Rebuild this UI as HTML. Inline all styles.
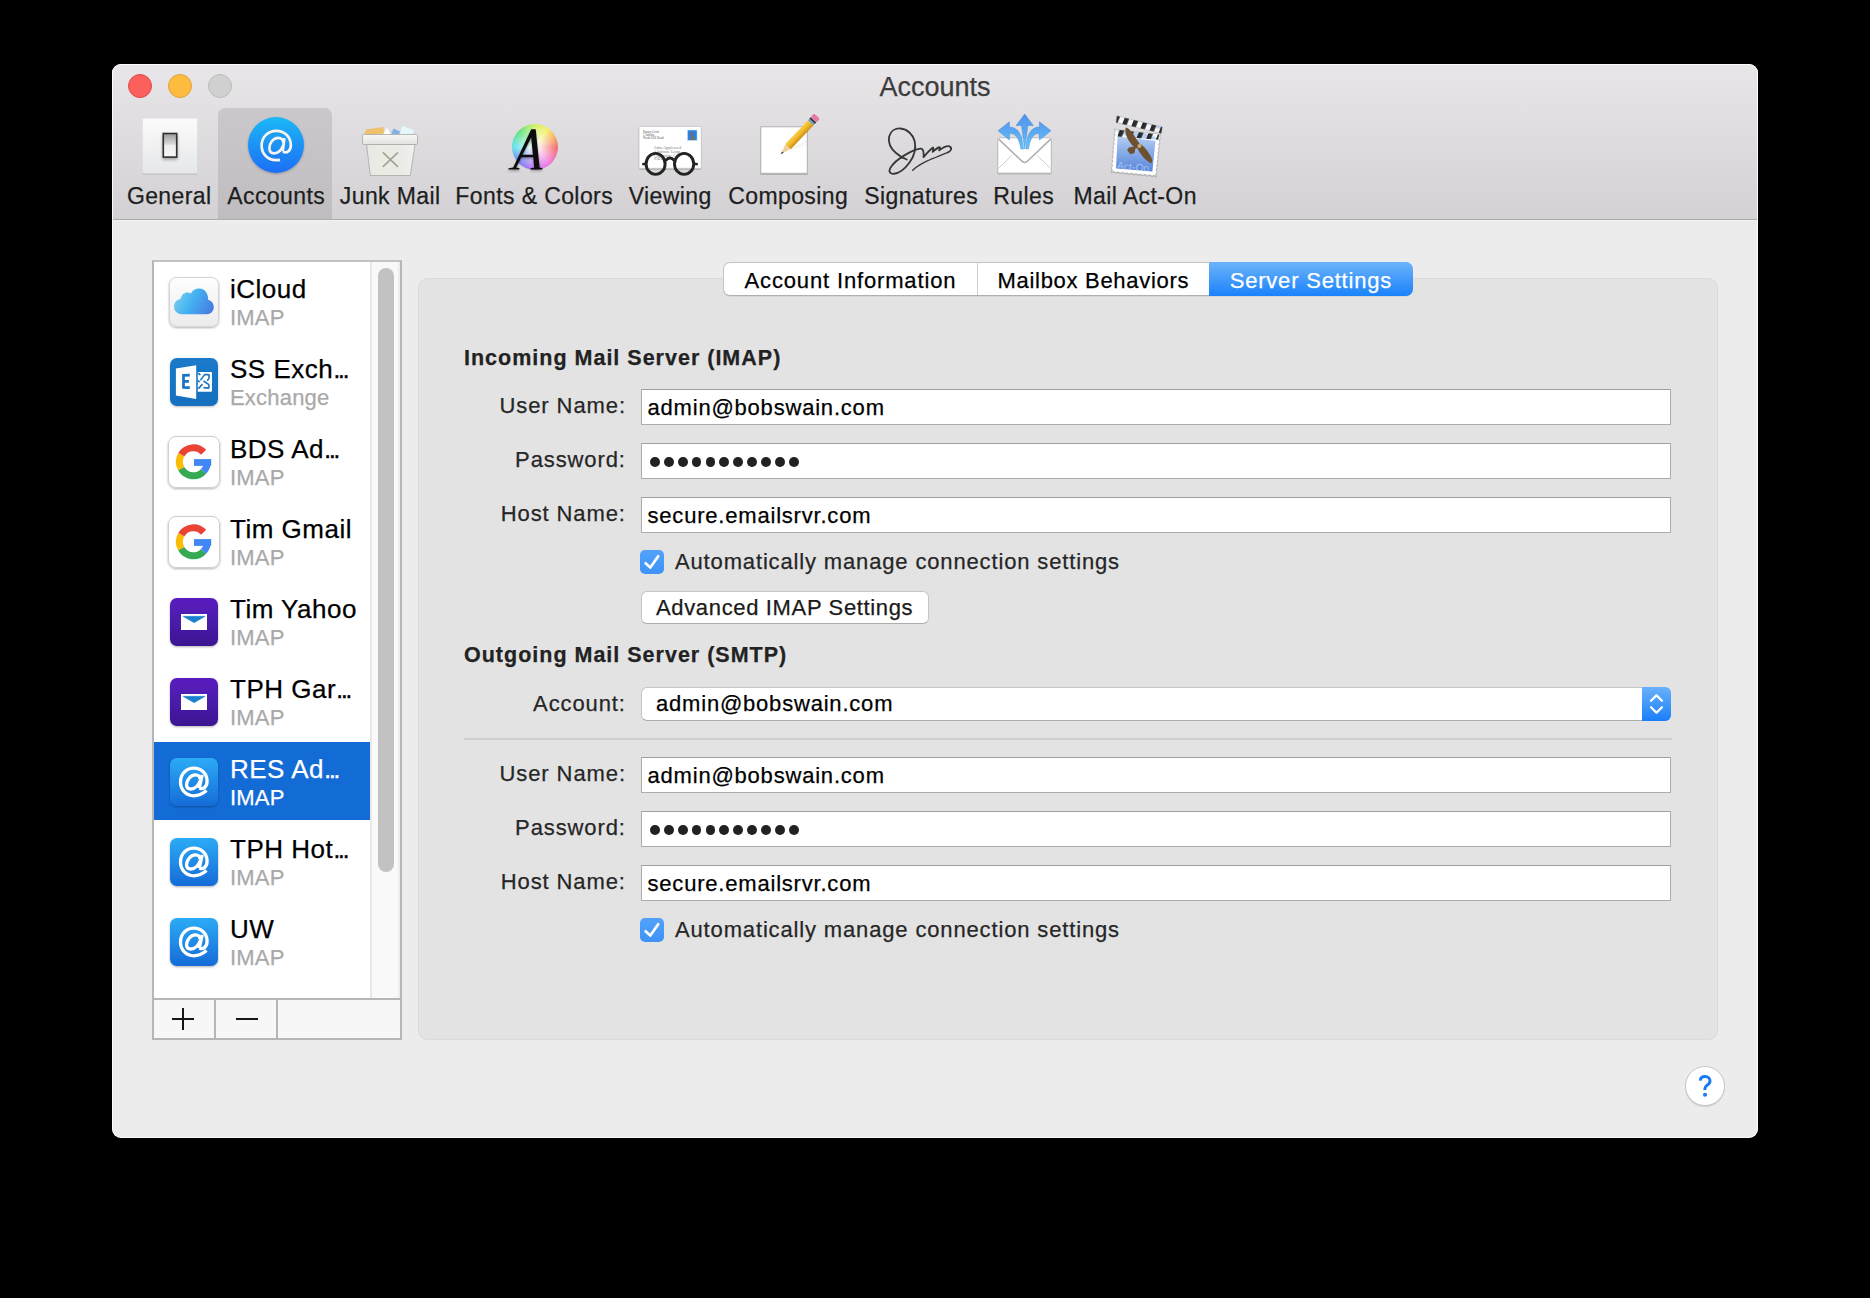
<!DOCTYPE html>
<html><head><meta charset="utf-8"><style>
html,body{margin:0;padding:0;background:#000;width:1870px;height:1298px;overflow:hidden}
.b{position:absolute}
.t{position:absolute;font-family:"Liberation Sans",sans-serif;line-height:1;white-space:pre;-webkit-text-stroke:0.25px currentColor}
.bd{-webkit-text-stroke:0.1px currentColor}
svg{overflow:visible}
</style></head><body>
<div class="b" style="left:112px;top:64px;width:1646px;height:1074px;border-radius:9px;background:#ececec;overflow:hidden"><div class="b" style="left:0;top:0;width:1646px;height:155px;background:linear-gradient(#e8e6e9,#d3d1d4);border-bottom:1px solid #acaaad"></div><div class="b" style="left:0;top:156px;width:1646px;height:1px;background:#f2f2f2"></div><div class="b" style="left:0;top:0;width:1646px;height:1074px;border-radius:9px;box-shadow:inset 0 0 0 1px rgba(255,255,255,0.9)"></div></div>
<div class="b" style="left:128px;top:74px;width:22px;height:22px;border-radius:50%;background:#fc605c;border:1px solid #de4a46"></div>
<div class="b" style="left:168px;top:74px;width:22px;height:22px;border-radius:50%;background:#fdbc40;border:1px solid #dea236"></div>
<div class="b" style="left:208px;top:74px;width:22px;height:22px;border-radius:50%;background:#d0d0d0;border:1px solid #bcbcbc"></div>
<div class="t" style="top:74.34px;font-size:27px;color:#3c3c3c;left:535px;width:800px;text-align:center;">Accounts</div>
<div class="b" style="left:218px;top:108px;width:114px;height:111px;background:linear-gradient(#cac8ca,#bfbdbf);border-radius:7px 7px 0 0"></div>
<div class="t" style="top:184.53px;font-size:23px;color:#1e1e1e;letter-spacing:0.4px;left:-231px;width:800px;text-align:center;text-indent:0.4px;">General</div>
<div class="t" style="top:184.53px;font-size:23px;color:#1e1e1e;letter-spacing:0.4px;left:-124px;width:800px;text-align:center;text-indent:0.4px;">Accounts</div>
<div class="t" style="top:184.53px;font-size:23px;color:#1e1e1e;letter-spacing:0.4px;left:-10px;width:800px;text-align:center;text-indent:0.4px;">Junk Mail</div>
<div class="t" style="top:184.53px;font-size:23px;color:#1e1e1e;letter-spacing:0.4px;left:134px;width:800px;text-align:center;text-indent:0.4px;">Fonts &amp; Colors</div>
<div class="t" style="top:184.53px;font-size:23px;color:#1e1e1e;letter-spacing:0.4px;left:270px;width:800px;text-align:center;text-indent:0.4px;">Viewing</div>
<div class="t" style="top:184.53px;font-size:23px;color:#1e1e1e;letter-spacing:0.4px;left:388px;width:800px;text-align:center;text-indent:0.4px;">Composing</div>
<div class="t" style="top:184.53px;font-size:23px;color:#1e1e1e;letter-spacing:0.4px;left:521px;width:800px;text-align:center;text-indent:0.4px;">Signatures</div>
<div class="t" style="top:184.53px;font-size:23px;color:#1e1e1e;letter-spacing:0.4px;left:623.5px;width:800px;text-align:center;text-indent:0.4px;">Rules</div>
<div class="t" style="top:184.53px;font-size:23px;color:#1e1e1e;letter-spacing:0.4px;left:735px;width:800px;text-align:center;text-indent:0.4px;">Mail Act-On</div>
<svg class="b" style="left:140px;top:116px" width="60" height="62" viewBox="0 0 60 62"><defs><linearGradient id="gp" x1="0" y1="0" x2="0" y2="1"><stop offset="0" stop-color="#fbfbfb"/><stop offset="1" stop-color="#e6e7e9"/></linearGradient><linearGradient id="gs" x1="0" y1="0" x2="0" y2="1"><stop offset="0" stop-color="#9c9c9c"/><stop offset="0.45" stop-color="#d8d8d8"/><stop offset="0.5" stop-color="#eeeeee"/><stop offset="1" stop-color="#f6f6f6"/></linearGradient><filter id="gsh" x="-30%" y="-30%" width="160%" height="160%"><feDropShadow dx="0" dy="0.5" stdDeviation="0.6" flood-color="#000" flood-opacity="0.35"/></filter><filter id="gsh2" x="-50%" y="-50%" width="200%" height="200%"><feDropShadow dx="0" dy="2" stdDeviation="1.5" flood-color="#000" flood-opacity="0.3"/></filter></defs><rect x="2.5" y="2.5" width="55" height="55" rx="1" fill="url(#gp)" filter="url(#gsh)"/><rect x="23.3" y="17.5" width="13.4" height="23.6" fill="url(#gs)" stroke="#2e2e2e" stroke-width="1.6" filter="url(#gsh2)"/></svg>
<svg class="b" style="left:246px;top:115px" width="60" height="62" viewBox="246 115 60 62"><defs><linearGradient id="acg" x1="0" y1="0" x2="0" y2="1"><stop offset="0" stop-color="#1fb8f6"/><stop offset="1" stop-color="#1a6ef6"/></linearGradient><filter id="acsh" x="-30%" y="-30%" width="160%" height="160%"><feDropShadow dx="0" dy="1" stdDeviation="0.8" flood-color="#000" flood-opacity="0.25"/></filter><filter id="acsh2" x="-30%" y="-30%" width="160%" height="160%"><feDropShadow dx="0" dy="0.6" stdDeviation="0.5" flood-color="#000" flood-opacity="0.2"/></filter></defs><circle cx="276" cy="145" r="28" fill="url(#acg)" filter="url(#acsh)"/><g transform="translate(252,121)" fill="none" stroke="#f4f5f0" stroke-width="2.7" filter="url(#acsh2)"><path d="M31 30.6 C34.6 32.6 38.8 30 38.8 24.5 C38.8 15.5 32.3 9.9 24.2 9.9 C15.8 9.9 9.6 16.3 9.6 24.5 C9.6 33 15.8 39.1 24.2 39.1 C25.6 39.1 26.8 39 28 38.8"/><path d="M32.4 17.2 L30.7 30.3"/><path d="M31.7 22.3 C31.2 18.9 29.1 16.9 26.3 16.9 C20.8 16.9 17.4 22.5 17.4 27 C17.4 30.5 19.3 32.4 22 32.4 C26.5 32.4 30.3 28.2 31.4 23.5"/></g></svg>
<svg class="b" style="left:360px;top:122px" width="62" height="58" viewBox="360 122 62 58"><defs><linearGradient id="tb" x1="0" y1="0" x2="1" y2="0"><stop offset="0" stop-color="#e8e8e6"/><stop offset="0.3" stop-color="#ecebe4"/><stop offset="0.7" stop-color="#e9ebe6"/><stop offset="1" stop-color="#f2f2f0"/></linearGradient><linearGradient id="tr" x1="0" y1="0" x2="0" y2="1"><stop offset="0" stop-color="#f8f8f6"/><stop offset="1" stop-color="#e2e2de"/></linearGradient></defs><path d="M364 134.5 L383.5 127.5 L384 134.5 Z" fill="#e9bf62"/><path d="M364.5 134.5 L366 129.5 L383 127 L384 134.5 Z" fill="#eec16a"/><path d="M383 134.5 L387 127 L391 134.5 Z" fill="#fff" stroke="#ddd" stroke-width="0.4"/><path d="M391 134.5 L393.5 128.5 L400 131.5 L399.5 134.5 Z" fill="#7fb3e4"/><path d="M399.5 134.5 L402 125.5 L414.5 130 L413 134.5 Z" fill="#e6f6fb" stroke="#cde" stroke-width="0.4"/><path d="M366.5 144.5 L415 144.5 L410.3 175.5 L370.3 175.5 Z" fill="url(#tb)" stroke="#a8a8a6" stroke-width="0.8"/><rect x="362.5" y="134.5" width="55" height="10" rx="1.2" fill="url(#tr)" stroke="#a8a8a6" stroke-width="0.8"/><path d="M382.8 152.3 L398 166.8 M398 152.3 L382.8 166.8" stroke="#a4a290" stroke-width="1.6"/></svg>
<div class="b" style="left:512px;top:124px;width:46px;height:46px;border-radius:50%;background:conic-gradient(from 0deg,#d0f060,#f4ee62 35deg,#f6a860 65deg,#f26868 92deg,#f276e0 140deg,#b070f0 190deg,#6a84f2 230deg,#5ee0e8 270deg,#5ae47a 315deg,#d0f060)"></div>
<svg class="b" style="left:500px;top:118px" width="66" height="60" viewBox="500 118 66 60"><defs><radialGradient id="cw" cx="0.5" cy="0.5" r="0.5"><stop offset="0" stop-color="#fff" stop-opacity="1"/><stop offset="0.15" stop-color="#fff" stop-opacity="0.9"/><stop offset="1" stop-color="#fff" stop-opacity="0"/></radialGradient><filter id="ash" x="-30%" y="-30%" width="160%" height="160%"><feDropShadow dx="0" dy="1.5" stdDeviation="1.2" flood-color="#000" flood-opacity="0.35"/></filter></defs><circle cx="535" cy="147" r="23" fill="url(#cw)"/><path d="M508.3 169.6 L519.3 169.6 L519.5 168.2 L516.2 167.6 L521.3 157.3 L533.2 157.3 L534.2 167.6 L530.6 168.2 L530.4 169.6 L542.3 169.6 L542.5 168.2 L539.6 167.6 L535.7 129.3 L531.2 129.3 L513.2 167.4 L508.6 168.2 Z M522.5 154.8 L531.2 137.5 L532.9 154.8 Z" fill="#111" fill-rule="evenodd" filter="url(#ash)"/></svg>
<svg class="b" style="left:636px;top:124px" width="66" height="56" viewBox="636 124 66 56"><defs><filter id="vsh" x="-30%" y="-30%" width="160%" height="160%"><feDropShadow dx="0" dy="0.6" stdDeviation="0.5" flood-color="#000" flood-opacity="0.35"/></filter></defs><rect x="639" y="126.5" width="62.3" height="41.8" rx="1" fill="#fff" stroke="#c6c6c6" stroke-width="0.8" filter="url(#vsh)"/><rect x="687.3" y="130" width="9.8" height="10.5" fill="#2d7fe0" stroke="#dfe6ee" stroke-width="0.6"/><path d="M691 132 L693.5 138.5 L690 139" stroke="#8b6a3c" stroke-width="1.6" fill="none"/><g font-family="Liberation Serif" fill="#555"><text x="643" y="132.8" font-size="3.2">Danny Croft</text><text x="643" y="135.6" font-size="3.2">1 Infinite</text><text x="643" y="138.8" font-size="3.2">North Hill Road</text></g><g font-family="Liberation Serif" fill="#808080"><text x="654" y="149" font-size="4.3">John Appleseed</text><text x="654" y="152.8" font-size="4.3">1 Infinite Loop</text><text x="654" y="156.6" font-size="4.3">Cupertino, CA</text><text x="654" y="160.4" font-size="4.3">95014</text></g><g fill="none" stroke="#232323" stroke-width="2.9"><ellipse cx="655.6" cy="163.9" rx="9.5" ry="10.5"/><ellipse cx="684.1" cy="163.9" rx="9.6" ry="10.5"/><path d="M665.5 160.5 Q670 155.5 674.3 160.5"/><path d="M642.3 164.2 L646.3 163.8 M693.5 163.8 L697.8 164.2" stroke-width="2.6"/></g></svg>
<svg class="b" style="left:756px;top:110px" width="68" height="70" viewBox="756 110 68 70"><defs><filter id="csh" x="-30%" y="-30%" width="160%" height="160%"><feDropShadow dx="0" dy="0.6" stdDeviation="0.5" flood-color="#000" flood-opacity="0.35"/></filter><linearGradient id="pen" x1="0" y1="0" x2="0" y2="1"><stop offset="0" stop-color="#f7cf48"/><stop offset="0.5" stop-color="#f1b82a"/><stop offset="1" stop-color="#c98c10"/></linearGradient><linearGradient id="psh" x1="0" y1="0" x2="1" y2="1"><stop offset="0" stop-color="#000" stop-opacity="0.08"/><stop offset="1" stop-color="#000" stop-opacity="0"/></linearGradient></defs><rect x="760.8" y="126.8" width="46.5" height="46.5" fill="#fff" stroke="#b4b4b4" stroke-width="1" filter="url(#csh)"/><path d="M788 151 L807 139 L807 146 Z" fill="url(#psh)"/><g transform="translate(780.8,154.3) rotate(-46.5)"><path d="M0 0 L10.5 -3.5 L10.5 3.5 Z" fill="#f0cf9c"/><path d="M0 0 L3 -1 L3 1 Z" fill="#333"/><rect x="10.5" y="-3.8" width="33" height="7.6" fill="url(#pen)"/><rect x="43.5" y="-3.8" width="4" height="7.6" fill="#6f9fc2"/><rect x="45.8" y="-3.8" width="1.5" height="7.6" fill="#3a2a2a"/><rect x="47.5" y="-4.1" width="5.2" height="8.2" rx="2" fill="#e47aa6"/></g></svg>
<svg class="b" style="left:875px;top:115px" width="90" height="70" viewBox="0 0 1669 1298"><path d="M590,825 C520,800 450,760 390,705 C290,620 240,520 262,400 C290,290 380,245 470,250 C600,260 700,360 735,480 C760,600 730,760 640,880 C560,990 460,1080 350,1090 C280,1095 250,1050 280,990 C330,900 440,810 560,740 C680,670 800,615 860,625 C910,640 905,720 900,780 C950,720 1020,640 1070,605 C1090,595 1080,650 1070,685 C1120,640 1170,600 1195,598 C1215,600 1195,640 1190,655 C1250,610 1320,560 1380,580 C1430,600 1420,660 1360,690" fill="none" stroke="#363636" stroke-width="34" stroke-linecap="round" stroke-linejoin="round"/><path d="M1360,690 C1250,740 1100,790 950,860 C850,910 760,960 700,1025" fill="none" stroke="#363636" stroke-width="26" stroke-linecap="round"/></svg>
<svg class="b" style="left:990px;top:105px" width="70" height="75" viewBox="0 0 1211 1298"><defs><linearGradient id="rg" x1="0" y1="150" x2="0" y2="760" gradientUnits="userSpaceOnUse"><stop offset="0" stop-color="#4f92ea"/><stop offset="0.5" stop-color="#5aa8f2"/><stop offset="1" stop-color="#64c8f8"/></linearGradient><filter id="rsh" x="-30%" y="-30%" width="160%" height="160%"><feDropShadow dx="0" dy="10" stdDeviation="8" flood-color="#000" flood-opacity="0.35"/></filter></defs><rect x="135" y="568" width="925" height="610" rx="12" fill="#fff" stroke="#b8b8b8" stroke-width="14" filter="url(#rsh)"/><path d="M150 590 L540 960 Q600 1030 660 960 L1050 590" fill="none" stroke="#adadad" stroke-width="26"/><path d="M145 1100 L380 870 M1050 1100 L815 870" fill="none" stroke="#c4c4c4" stroke-width="14"/><g fill="url(#rg)" stroke="#3f85d8" stroke-width="8" stroke-linejoin="round"><path d="M450 355 L600 155 L750 355 L655 355 L600 760 L545 355 Z"/><path d="M140 445 L335 290 L335 380 C470 380 560 500 580 760 L535 760 C500 560 440 490 340 490 L335 605 Z"/><path d="M1055 445 L855 290 L855 380 C720 380 630 500 620 760 L665 760 C700 560 760 490 850 490 L855 605 Z"/></g></svg>
<svg class="b" style="left:1100px;top:105px" width="75" height="80" viewBox="0 0 1217 1298"><defs><linearGradient id="sg" x1="0" y1="0" x2="0" y2="1"><stop offset="0" stop-color="#b3ccf2"/><stop offset="1" stop-color="#5585dc"/></linearGradient><filter id="ssh" x="-30%" y="-30%" width="160%" height="160%"><feDropShadow dx="0" dy="10" stdDeviation="10" flood-color="#000" flood-opacity="0.35"/></filter><pattern id="stripe" width="150" height="300" patternUnits="userSpaceOnUse" patternTransform="rotate(22)"><rect width="150" height="300" fill="#f4f6fa"/><rect y="150" width="150" height="150" fill="#b9d0f4"/><rect width="72" height="300" fill="#2b2b2b"/></pattern></defs><path d="M235 385 L235 385 Q269 423 310 394 L310 394 Q344 432 385 402 L385 402 Q419 440 460 410 L460 410 Q494 449 535 419 L535 419 Q569 457 610 428 L610 428 Q644 466 685 436 L685 436 Q719 474 760 444 L760 444 Q794 483 835 453 L835 453 Q869 491 910 462 L910 462 Q944 500 985 470 L985 470 Q948 501 978 539 L978 539 Q941 570 971 608 L971 608 Q934 639 964 677 L964 677 Q927 708 957 746 L957 746 Q920 777 950 815 L950 815 Q913 846 943 884 L943 884 Q906 915 936 953 L936 953 Q899 984 929 1022 L929 1022 Q892 1053 922 1091 L922 1091 Q885 1122 915 1160 L915 1160 Q881 1123 842 1153 L842 1153 Q808 1116 768 1146 L768 1146 Q734 1109 694 1139 L694 1139 Q661 1102 621 1132 L621 1132 Q587 1095 548 1125 L548 1125 Q514 1088 474 1118 L474 1118 Q440 1081 400 1111 L400 1111 Q367 1074 327 1104 L327 1104 Q293 1067 254 1097 L254 1097 Q220 1060 180 1090 L180 1090 Q217 1057 186 1020 L186 1020 Q222 987 191 949 L191 949 Q228 916 196 878 L196 878 Q233 846 202 808 L202 808 Q239 775 208 738 L208 738 Q244 705 213 667 L213 667 Q250 634 218 596 L218 596 Q255 564 224 526 L224 526 Q261 493 230 456 L230 456 Q266 423 235 385 Z" fill="#fff" stroke="#9a9a9a" stroke-width="7" filter="url(#ssh)"/><path d="M285 510 L900 580 L850 1080 L260 1030 Z" fill="url(#sg)"/><path d="M290 400 L960 480 L945 565 L285 510 Z" fill="url(#stripe)"/><path d="M275 175 L1012 355 L995 462 L258 285 Z" fill="url(#stripe)" stroke="#999" stroke-width="6"/><g fill="#6e4f2e"><path d="M420 365 C490 380 540 470 590 550 C620 600 650 630 660 655 L580 710 C520 650 450 570 425 490 C410 440 405 400 420 365 Z"/><path d="M600 690 L670 640 C740 700 810 790 850 890 L835 950 C740 900 650 800 600 690 Z"/><path d="M470 690 L580 670 L560 780 L490 800 L440 730 Z"/><circle cx="640" cy="665" r="34" fill="#c9a678"/></g><text x="270" y="1040" font-family="Liberation Sans" font-size="170" fill="#e0eafa" fill-opacity="0.55" transform="rotate(5 270 1040)">Act-On</text></svg><div class="b" style="left:152px;top:260px;width:250px;height:780px;border:2px solid #b6b6b6;border-top-color:#c2c2c2;background:#fff;box-sizing:border-box"></div>
<div class="b" style="left:370px;top:262px;width:30px;height:736px;background:#f9f9f9;border-left:2px solid #e8e8e8;border-right:2px solid #ededed;box-sizing:border-box"></div>
<div class="b" style="left:378px;top:268px;width:16px;height:604px;background:#c2c2c2;border-radius:8px"></div>
<div class="b" style="left:154px;top:998px;width:246px;height:40px;background:#f7f7f7;border-top:2px solid #b6b6b6;box-sizing:border-box"></div>
<div class="b" style="left:214px;top:1000px;width:2px;height:38px;background:#b6b6b6"></div>
<div class="b" style="left:276px;top:1000px;width:2px;height:38px;background:#b6b6b6"></div>
<div class="b" style="left:172px;top:1018px;width:22px;height:2px;background:#161616"></div>
<div class="b" style="left:182px;top:1008px;width:2px;height:22px;background:#161616"></div>
<div class="b" style="left:236px;top:1018px;width:22px;height:2px;background:#161616"></div>
<div class="t" style="top:275.99px;font-size:26px;color:#000;letter-spacing:0.5px;left:230px;">iCloud</div>
<div class="t" style="top:307.38px;font-size:22px;color:#a9a9a9;letter-spacing:0.2px;left:230px;">IMAP</div>
<svg class="b" style="left:169px;top:277px" width="50" height="50" viewBox="0 0 50 50"><defs><linearGradient id="icg" x1="0" y1="0" x2="0" y2="1"><stop offset="0" stop-color="#fefefe"/><stop offset="1" stop-color="#ebebeb"/></linearGradient><linearGradient id="clg" gradientUnits="userSpaceOnUse" x1="5" y1="14" x2="45" y2="36"><stop offset="0" stop-color="#86d3f2"/><stop offset="0.45" stop-color="#42b2f0"/><stop offset="1" stop-color="#4a74e2"/></linearGradient><filter id="sh1" x="-20%" y="-20%" width="140%" height="150%"><feDropShadow dx="0" dy="1" stdDeviation="0.8" flood-color="#000" flood-opacity="0.3"/></filter></defs><rect x="0.5" y="0.5" width="49" height="49" rx="7" fill="url(#icg)" stroke="#d6d6d6" stroke-width="1" filter="url(#sh1)"/><path d="M12.5 37.2 C7.8 37.2 5 33.6 5 29.6 C5 25.5 8 22.3 11.6 22 C12.2 18.2 15 15.6 18.5 15.6 C19.8 15.6 20.8 15.9 21.8 16.5 C23.5 13.4 26.6 11.6 30 11.6 C35.6 11.6 39.4 16.3 39.1 22.8 C42.5 23.7 44.8 26.5 44.8 30 C44.8 34.1 41.8 37.2 37.6 37.2 Z" fill="url(#clg)"/></svg>
<div class="t" style="top:355.99px;font-size:26px;color:#000;letter-spacing:0.5px;left:230px;">SS Exch<span style="letter-spacing:-2.6px">...</span></div>
<div class="t" style="top:387.38px;font-size:22px;color:#a9a9a9;letter-spacing:0.2px;left:230px;">Exchange</div>
<svg class="b" style="left:170px;top:358px" width="48" height="48" viewBox="0 0 48 48"><defs><filter id="sh2" x="-20%" y="-20%" width="140%" height="150%"><feDropShadow dx="0" dy="1" stdDeviation="0.8" flood-color="#000" flood-opacity="0.25"/></filter><linearGradient id="exg" x1="0" y1="0" x2="0" y2="1"><stop offset="0" stop-color="#1b7acb"/><stop offset="1" stop-color="#136fbe"/></linearGradient></defs><rect x="0" y="0" width="48" height="48" rx="7" fill="url(#exg)" filter="url(#sh2)"/><path d="M5.9 10.5 L26.2 7.2 L26.2 41 L5.9 37.5 Z" fill="#fff"/><path d="M27.8 13.9 L41 13.9 Q42 13.9 42 14.9 L42 32.8 Q42 33.8 41 33.8 L27.8 33.8 Z" fill="#fff"/><path d="M19.8 17.2 L13.5 17.4 L13.5 29.4 L19.8 29.7 M13.5 23.4 L18.9 23.4" fill="none" stroke="#1873c3" stroke-width="2.7"/><g fill="none" stroke="#1873c3" stroke-width="1.6" stroke-linejoin="round"><path d="M30.4 22.4 L34.6 16.6 L38.2 16.6 Q39.3 16.6 39.1 18 L39 20 Q38.8 21.5 37 22.6"/><path d="M33.5 23 L38.2 26.2 Q39 26.8 39 28 L38.9 29.5 Q38.9 30.1 38.2 30.1 L33.5 29.6"/><path d="M32.5 26.1 L28.3 30.7 M27.9 15.4 Q29.5 15.6 30.4 17.2 M27.9 22.9 Q29.2 23.2 29.6 24.3"/></g></svg>
<div class="t" style="top:435.99px;font-size:26px;color:#000;letter-spacing:0.5px;left:230px;">BDS Ad<span style="letter-spacing:-2.6px">...</span></div>
<div class="t" style="top:467.38px;font-size:22px;color:#a9a9a9;letter-spacing:0.2px;left:230px;">IMAP</div>
<svg class="b" style="left:168px;top:436px" width="52" height="52" viewBox="0 0 52 52"><defs><filter id="sh3" x="-20%" y="-20%" width="140%" height="150%"><feDropShadow dx="0" dy="1" stdDeviation="0.8" flood-color="#000" flood-opacity="0.3"/></filter></defs><rect x="0.5" y="0.5" width="51" height="51" rx="7.5" fill="#fff" stroke="#d0d0d0" stroke-width="1" filter="url(#sh3)"/><path d="M35.64 16.25 A14.0 14.0 0 0 0 13.28 18.80" fill="none" stroke="#ea4335" stroke-width="7"/><path d="M13.28 18.80 A14.0 14.0 0 0 0 13.28 32.80" fill="none" stroke="#fbbc05" stroke-width="7"/><path d="M13.28 32.80 A14.0 14.0 0 0 0 35.64 35.35" fill="none" stroke="#34a853" stroke-width="7"/><path d="M35.64 35.35 A14.0 14.0 0 0 0 39.40 25.80" fill="none" stroke="#4285f4" stroke-width="7"/><rect x="26" y="23.1" width="17.2" height="6.8" fill="#4285f4"/></svg>
<div class="t" style="top:515.99px;font-size:26px;color:#000;letter-spacing:0.5px;left:230px;">Tim Gmail</div>
<div class="t" style="top:547.38px;font-size:22px;color:#a9a9a9;letter-spacing:0.2px;left:230px;">IMAP</div>
<svg class="b" style="left:168px;top:516px" width="52" height="52" viewBox="0 0 52 52"><defs><filter id="sh3" x="-20%" y="-20%" width="140%" height="150%"><feDropShadow dx="0" dy="1" stdDeviation="0.8" flood-color="#000" flood-opacity="0.3"/></filter></defs><rect x="0.5" y="0.5" width="51" height="51" rx="7.5" fill="#fff" stroke="#d0d0d0" stroke-width="1" filter="url(#sh3)"/><path d="M35.64 16.25 A14.0 14.0 0 0 0 13.28 18.80" fill="none" stroke="#ea4335" stroke-width="7"/><path d="M13.28 18.80 A14.0 14.0 0 0 0 13.28 32.80" fill="none" stroke="#fbbc05" stroke-width="7"/><path d="M13.28 32.80 A14.0 14.0 0 0 0 35.64 35.35" fill="none" stroke="#34a853" stroke-width="7"/><path d="M35.64 35.35 A14.0 14.0 0 0 0 39.40 25.80" fill="none" stroke="#4285f4" stroke-width="7"/><rect x="26" y="23.1" width="17.2" height="6.8" fill="#4285f4"/></svg>
<div class="t" style="top:595.99px;font-size:26px;color:#000;letter-spacing:0.5px;left:230px;">Tim Yahoo</div>
<div class="t" style="top:627.38px;font-size:22px;color:#a9a9a9;letter-spacing:0.2px;left:230px;">IMAP</div>
<svg class="b" style="left:170px;top:598px" width="48" height="48" viewBox="0 0 48 48"><defs><linearGradient id="yg" x1="0" y1="0" x2="0" y2="1"><stop offset="0" stop-color="#5a1ec0"/><stop offset="1" stop-color="#3b1792"/></linearGradient><filter id="sh4" x="-20%" y="-20%" width="140%" height="150%"><feDropShadow dx="0" dy="1" stdDeviation="0.8" flood-color="#000" flood-opacity="0.3"/></filter></defs><rect x="0" y="0" width="48" height="48" rx="7" fill="url(#yg)" filter="url(#sh4)"/><rect x="11" y="16" width="26" height="16" fill="#fff"/><path d="M13.4 18.4 L34.8 18.4 L24.1 24.6 Z" fill="#1a80cf" stroke="#1a80cf" stroke-width="0.8" stroke-linejoin="round"/></svg>
<div class="t" style="top:675.99px;font-size:26px;color:#000;letter-spacing:0.5px;left:230px;">TPH Gar<span style="letter-spacing:-2.6px">...</span></div>
<div class="t" style="top:707.38px;font-size:22px;color:#a9a9a9;letter-spacing:0.2px;left:230px;">IMAP</div>
<svg class="b" style="left:170px;top:678px" width="48" height="48" viewBox="0 0 48 48"><defs><linearGradient id="yg" x1="0" y1="0" x2="0" y2="1"><stop offset="0" stop-color="#5a1ec0"/><stop offset="1" stop-color="#3b1792"/></linearGradient><filter id="sh4" x="-20%" y="-20%" width="140%" height="150%"><feDropShadow dx="0" dy="1" stdDeviation="0.8" flood-color="#000" flood-opacity="0.3"/></filter></defs><rect x="0" y="0" width="48" height="48" rx="7" fill="url(#yg)" filter="url(#sh4)"/><rect x="11" y="16" width="26" height="16" fill="#fff"/><path d="M13.4 18.4 L34.8 18.4 L24.1 24.6 Z" fill="#1a80cf" stroke="#1a80cf" stroke-width="0.8" stroke-linejoin="round"/></svg>
<div class="b" style="left:154px;top:742px;width:216px;height:78px;background:#136cd6"></div>
<div class="t" style="top:755.99px;font-size:26px;color:#fff;letter-spacing:0.5px;left:230px;">RES Ad<span style="letter-spacing:-2.6px">...</span></div>
<div class="t" style="top:787.38px;font-size:22px;color:#fff;letter-spacing:0.2px;left:230px;">IMAP</div>
<svg class="b" style="left:170px;top:758px" width="48" height="48" viewBox="0 0 48 48"><defs><linearGradient id="ag" x1="0" y1="0" x2="0" y2="1"><stop offset="0" stop-color="#2cabf6"/><stop offset="1" stop-color="#166bd8"/></linearGradient><filter id="sh5" x="-20%" y="-20%" width="140%" height="150%"><feDropShadow dx="0" dy="1" stdDeviation="0.8" flood-color="#000" flood-opacity="0.3"/></filter></defs><rect x="0" y="0" width="48" height="48" rx="7" fill="url(#ag)" filter="url(#sh5)"/><g fill="none" stroke="#fff" stroke-width="3.3"><path d="M29.5 30.2 C33 31.8 37.1 29 37.1 23.2 C37.1 15.2 31 10.2 23.8 10.2 C16 10.2 10.5 16.3 10.5 24 C10.5 32 16.3 37.8 24 37.8 C28.5 37.8 32.6 35.8 36.6 32.5"/><path d="M32.1 17 L29.3 30.4"/><path d="M30.5 21.8 C30 18.4 28 16.9 25.4 16.9 C20.4 16.9 16.5 22.5 16.5 27.1 C16.5 29.8 18.2 31 20.7 31 C25.2 31 29 26.8 30.2 22.6"/></g></svg>
<div class="t" style="top:835.99px;font-size:26px;color:#000;letter-spacing:0.5px;left:230px;">TPH Hot<span style="letter-spacing:-2.6px">...</span></div>
<div class="t" style="top:867.38px;font-size:22px;color:#a9a9a9;letter-spacing:0.2px;left:230px;">IMAP</div>
<svg class="b" style="left:170px;top:838px" width="48" height="48" viewBox="0 0 48 48"><defs><linearGradient id="ag" x1="0" y1="0" x2="0" y2="1"><stop offset="0" stop-color="#2cabf6"/><stop offset="1" stop-color="#166bd8"/></linearGradient><filter id="sh5" x="-20%" y="-20%" width="140%" height="150%"><feDropShadow dx="0" dy="1" stdDeviation="0.8" flood-color="#000" flood-opacity="0.3"/></filter></defs><rect x="0" y="0" width="48" height="48" rx="7" fill="url(#ag)" filter="url(#sh5)"/><g fill="none" stroke="#fff" stroke-width="3.3"><path d="M29.5 30.2 C33 31.8 37.1 29 37.1 23.2 C37.1 15.2 31 10.2 23.8 10.2 C16 10.2 10.5 16.3 10.5 24 C10.5 32 16.3 37.8 24 37.8 C28.5 37.8 32.6 35.8 36.6 32.5"/><path d="M32.1 17 L29.3 30.4"/><path d="M30.5 21.8 C30 18.4 28 16.9 25.4 16.9 C20.4 16.9 16.5 22.5 16.5 27.1 C16.5 29.8 18.2 31 20.7 31 C25.2 31 29 26.8 30.2 22.6"/></g></svg>
<div class="t" style="top:915.99px;font-size:26px;color:#000;letter-spacing:0.5px;left:230px;">UW</div>
<div class="t" style="top:947.38px;font-size:22px;color:#a9a9a9;letter-spacing:0.2px;left:230px;">IMAP</div>
<svg class="b" style="left:170px;top:918px" width="48" height="48" viewBox="0 0 48 48"><defs><linearGradient id="ag" x1="0" y1="0" x2="0" y2="1"><stop offset="0" stop-color="#2cabf6"/><stop offset="1" stop-color="#166bd8"/></linearGradient><filter id="sh5" x="-20%" y="-20%" width="140%" height="150%"><feDropShadow dx="0" dy="1" stdDeviation="0.8" flood-color="#000" flood-opacity="0.3"/></filter></defs><rect x="0" y="0" width="48" height="48" rx="7" fill="url(#ag)" filter="url(#sh5)"/><g fill="none" stroke="#fff" stroke-width="3.3"><path d="M29.5 30.2 C33 31.8 37.1 29 37.1 23.2 C37.1 15.2 31 10.2 23.8 10.2 C16 10.2 10.5 16.3 10.5 24 C10.5 32 16.3 37.8 24 37.8 C28.5 37.8 32.6 35.8 36.6 32.5"/><path d="M32.1 17 L29.3 30.4"/><path d="M30.5 21.8 C30 18.4 28 16.9 25.4 16.9 C20.4 16.9 16.5 22.5 16.5 27.1 C16.5 29.8 18.2 31 20.7 31 C25.2 31 29 26.8 30.2 22.6"/></g></svg>
<div class="b" style="left:418px;top:278px;width:1300px;height:762px;background:#e3e3e3;border:1px solid #d9d9d9;border-radius:10px;box-sizing:border-box"></div>
<div class="b" style="left:723px;top:262px;width:689px;height:34px;background:#fff;border:1px solid #c4c4c4;border-bottom-color:#b0b0b0;border-radius:7px;box-sizing:border-box;box-shadow:0 1px 0 rgba(0,0,0,0.05)"></div>
<div class="b" style="left:977px;top:263px;width:1px;height:32px;background:#d0d0d0"></div>
<div class="b" style="left:1209px;top:262px;width:204px;height:34px;background:linear-gradient(#6cb3fa,#1a82fb);border-radius:0 7px 7px 0"></div>
<div class="t" style="top:270.38px;font-size:22px;color:#000;letter-spacing:0.85px;left:450px;width:800px;text-align:center;text-indent:0.85px;">Account Information</div>
<div class="t" style="top:270.38px;font-size:22px;color:#000;letter-spacing:0.7px;left:693px;width:800px;text-align:center;text-indent:0.7px;">Mailbox Behaviors</div>
<div class="t" style="top:270.38px;font-size:22px;color:#fff;letter-spacing:0.8px;left:910.5px;width:800px;text-align:center;text-indent:0.8px;">Server Settings</div>
<div class="t" style="top:347.80px;font-size:21.5px;color:#222;font-weight:700;letter-spacing:1.0px;left:464px;">Incoming Mail Server (IMAP)</div>
<div class="t" style="top:395.38px;font-size:22px;color:#262626;letter-spacing:0.9px;right:1245px;margin-right:-0.9px;">User Name:</div>
<div class="b" style="left:641px;top:389px;width:1030px;height:36px;background:#fff;border:1px solid #acacac;border-top-color:#a0a0a0;box-sizing:border-box"></div>
<div class="t" style="top:397.38px;font-size:22px;color:#000;letter-spacing:0.8px;left:647.5px;">admin@bobswain.com</div>
<div class="t" style="top:449.38px;font-size:22px;color:#262626;letter-spacing:0.9px;right:1245px;margin-right:-0.9px;">Password:</div>
<div class="b" style="left:641px;top:443px;width:1030px;height:36px;background:#fff;border:1px solid #acacac;border-top-color:#a0a0a0;box-sizing:border-box"></div>
<div class="b" style="left:650.00px;top:456.9px;width:9.8px;height:9.8px;border-radius:50%;background:#222"></div><div class="b" style="left:663.89px;top:456.9px;width:9.8px;height:9.8px;border-radius:50%;background:#222"></div><div class="b" style="left:677.78px;top:456.9px;width:9.8px;height:9.8px;border-radius:50%;background:#222"></div><div class="b" style="left:691.67px;top:456.9px;width:9.8px;height:9.8px;border-radius:50%;background:#222"></div><div class="b" style="left:705.56px;top:456.9px;width:9.8px;height:9.8px;border-radius:50%;background:#222"></div><div class="b" style="left:719.45px;top:456.9px;width:9.8px;height:9.8px;border-radius:50%;background:#222"></div><div class="b" style="left:733.34px;top:456.9px;width:9.8px;height:9.8px;border-radius:50%;background:#222"></div><div class="b" style="left:747.23px;top:456.9px;width:9.8px;height:9.8px;border-radius:50%;background:#222"></div><div class="b" style="left:761.12px;top:456.9px;width:9.8px;height:9.8px;border-radius:50%;background:#222"></div><div class="b" style="left:775.01px;top:456.9px;width:9.8px;height:9.8px;border-radius:50%;background:#222"></div><div class="b" style="left:788.90px;top:456.9px;width:9.8px;height:9.8px;border-radius:50%;background:#222"></div>
<div class="t" style="top:503.38px;font-size:22px;color:#262626;letter-spacing:0.9px;right:1245px;margin-right:-0.9px;">Host Name:</div>
<div class="b" style="left:641px;top:497px;width:1030px;height:36px;background:#fff;border:1px solid #acacac;border-top-color:#a0a0a0;box-sizing:border-box"></div>
<div class="t" style="top:505.38px;font-size:22px;color:#000;letter-spacing:0.8px;left:647.5px;">secure.emailsrvr.com</div>
<div class="b" style="left:640px;top:550px;width:24px;height:24px;background:linear-gradient(#52a2fa,#3d92f7);border-radius:5px"></div>
<svg class="b" style="left:640px;top:550px" width="24" height="24"><path d="M5.6 13.3 L10.3 17.5 L18.2 6.3" fill="none" stroke="#fff" stroke-width="2.7" stroke-linecap="round" stroke-linejoin="round"/></svg>
<div class="t" style="top:551.38px;font-size:22px;color:#262626;letter-spacing:0.85px;left:675px;">Automatically manage connection settings</div>
<div class="b" style="left:641px;top:591px;width:288px;height:33px;background:#fff;border:1px solid #c6c6c6;border-bottom-color:#adadad;border-radius:6px;box-sizing:border-box"></div>
<div class="t" style="top:597.38px;font-size:22px;color:#1a1a1a;letter-spacing:0.65px;left:656px;">Advanced IMAP Settings</div>
<div class="t" style="top:645.30px;font-size:21.5px;color:#222;font-weight:700;letter-spacing:1.0px;left:464px;">Outgoing Mail Server (SMTP)</div>
<div class="t" style="top:693.38px;font-size:22px;color:#262626;letter-spacing:0.9px;right:1245px;margin-right:-0.9px;">Account:</div>
<div class="b" style="left:641px;top:687px;width:1030px;height:34px;background:#fff;border:1px solid #c6c6c6;border-bottom-color:#adadad;border-radius:6px;box-sizing:border-box"></div>
<div class="b" style="left:1642px;top:687px;width:29px;height:34px;background:linear-gradient(#69b1fa,#1a7ffa);border-radius:0 6px 6px 0"></div>
<svg class="b" style="left:1642px;top:687px" width="29" height="34"><path d="M9 13.8 L14.5 8.3 L20 13.8 M9 20.2 L14.5 25.7 L20 20.2" fill="none" stroke="#fff" stroke-width="2.2" stroke-linecap="round" stroke-linejoin="round"/></svg>
<div class="t" style="top:693.38px;font-size:22px;color:#000;letter-spacing:0.8px;left:656px;">admin@bobswain.com</div>
<div class="b" style="left:464px;top:738px;width:1208px;height:2px;background:#cfcfcf"></div>
<div class="t" style="top:763.38px;font-size:22px;color:#262626;letter-spacing:0.9px;right:1245px;margin-right:-0.9px;">User Name:</div>
<div class="b" style="left:641px;top:757px;width:1030px;height:36px;background:#fff;border:1px solid #acacac;border-top-color:#a0a0a0;box-sizing:border-box"></div>
<div class="t" style="top:765.38px;font-size:22px;color:#000;letter-spacing:0.8px;left:647.5px;">admin@bobswain.com</div>
<div class="t" style="top:817.38px;font-size:22px;color:#262626;letter-spacing:0.9px;right:1245px;margin-right:-0.9px;">Password:</div>
<div class="b" style="left:641px;top:811px;width:1030px;height:36px;background:#fff;border:1px solid #acacac;border-top-color:#a0a0a0;box-sizing:border-box"></div>
<div class="b" style="left:650.00px;top:824.9px;width:9.8px;height:9.8px;border-radius:50%;background:#222"></div><div class="b" style="left:663.89px;top:824.9px;width:9.8px;height:9.8px;border-radius:50%;background:#222"></div><div class="b" style="left:677.78px;top:824.9px;width:9.8px;height:9.8px;border-radius:50%;background:#222"></div><div class="b" style="left:691.67px;top:824.9px;width:9.8px;height:9.8px;border-radius:50%;background:#222"></div><div class="b" style="left:705.56px;top:824.9px;width:9.8px;height:9.8px;border-radius:50%;background:#222"></div><div class="b" style="left:719.45px;top:824.9px;width:9.8px;height:9.8px;border-radius:50%;background:#222"></div><div class="b" style="left:733.34px;top:824.9px;width:9.8px;height:9.8px;border-radius:50%;background:#222"></div><div class="b" style="left:747.23px;top:824.9px;width:9.8px;height:9.8px;border-radius:50%;background:#222"></div><div class="b" style="left:761.12px;top:824.9px;width:9.8px;height:9.8px;border-radius:50%;background:#222"></div><div class="b" style="left:775.01px;top:824.9px;width:9.8px;height:9.8px;border-radius:50%;background:#222"></div><div class="b" style="left:788.90px;top:824.9px;width:9.8px;height:9.8px;border-radius:50%;background:#222"></div>
<div class="t" style="top:871.38px;font-size:22px;color:#262626;letter-spacing:0.9px;right:1245px;margin-right:-0.9px;">Host Name:</div>
<div class="b" style="left:641px;top:865px;width:1030px;height:36px;background:#fff;border:1px solid #acacac;border-top-color:#a0a0a0;box-sizing:border-box"></div>
<div class="t" style="top:873.38px;font-size:22px;color:#000;letter-spacing:0.8px;left:647.5px;">secure.emailsrvr.com</div>
<div class="b" style="left:640px;top:918px;width:24px;height:24px;background:linear-gradient(#52a2fa,#3d92f7);border-radius:5px"></div>
<svg class="b" style="left:640px;top:918px" width="24" height="24"><path d="M5.6 13.3 L10.3 17.5 L18.2 6.3" fill="none" stroke="#fff" stroke-width="2.7" stroke-linecap="round" stroke-linejoin="round"/></svg>
<div class="t" style="top:919.38px;font-size:22px;color:#262626;letter-spacing:0.85px;left:675px;">Automatically manage connection settings</div>
<div class="b" style="left:1685px;top:1066px;width:40px;height:40px;background:#fff;border:1px solid #c8c8c8;border-radius:50%;box-sizing:border-box;box-shadow:0 1px 1px rgba(0,0,0,0.12)"></div>
<svg class="b" style="left:1690px;top:1070px" width="30" height="32" viewBox="1690 1070 30 32"><path d="M1700.2 1080.6 C1700.5 1078 1702.4 1076.6 1705.1 1076.6 C1708.1 1076.6 1710 1078.5 1710 1081 C1710 1083.2 1708.6 1084.3 1707.1 1085.3 C1705.6 1086.3 1704.9 1087.3 1704.9 1089 L1704.9 1089.9" fill="none" stroke="#1a7cf5" stroke-width="3.0"/><circle cx="1705" cy="1094.8" r="2.05" fill="#1a7cf5"/></svg>

</body></html>
